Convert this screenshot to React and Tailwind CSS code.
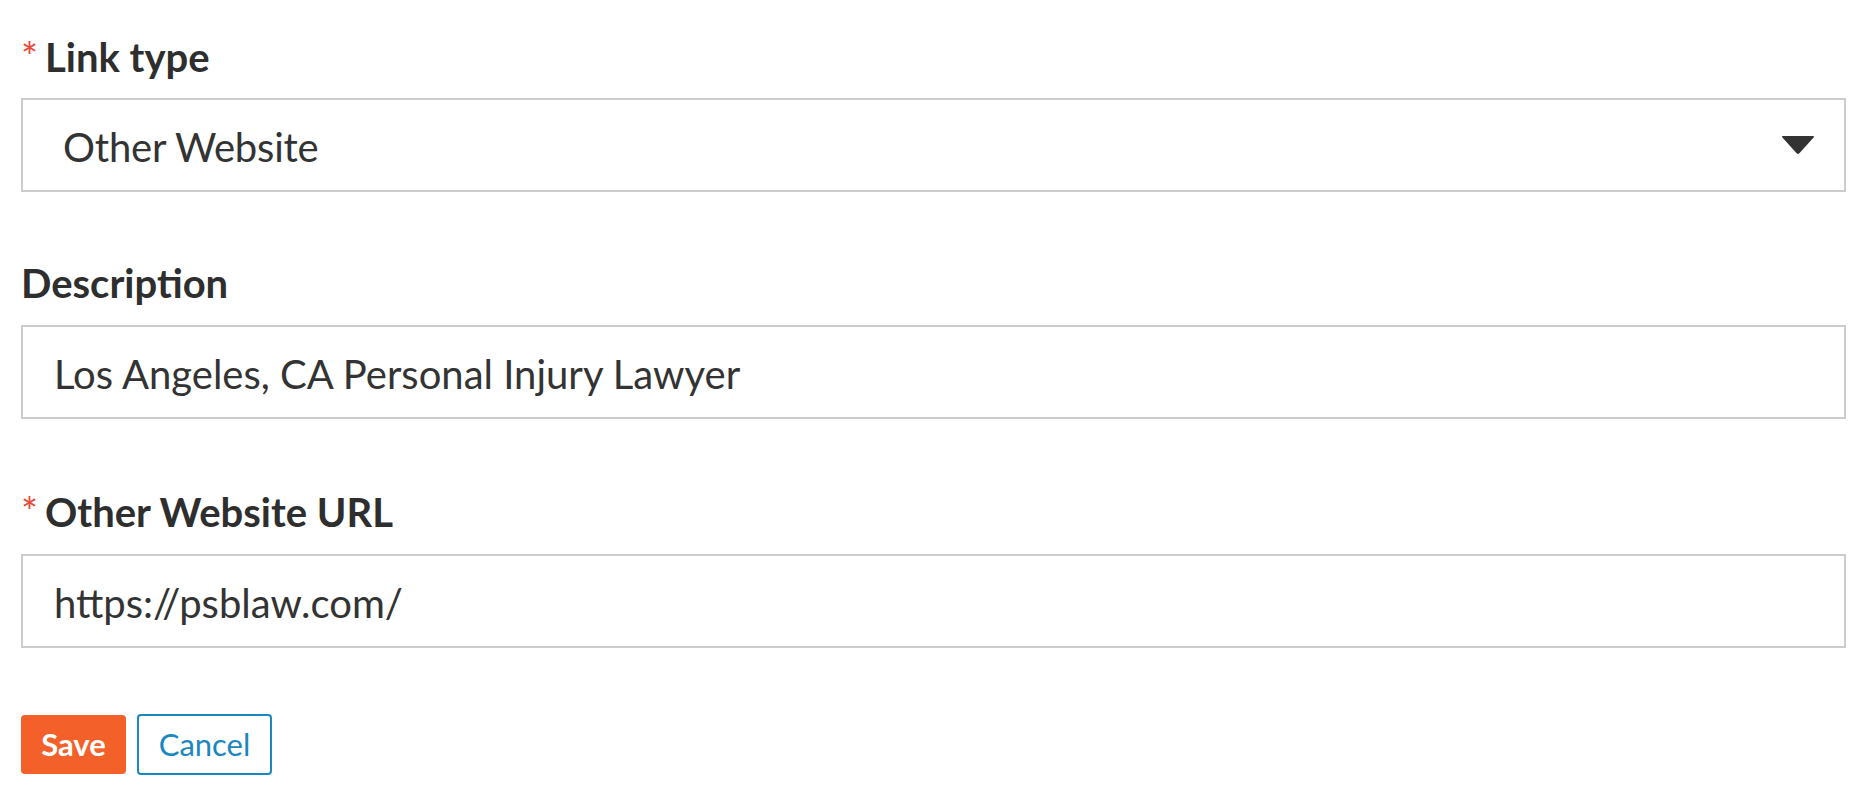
import React from 'react';

const fieldBox = 'flex h-[94px] w-full items-center border-2 border-[#cccccc] bg-white pt-[4px]';

const Label = ({ required, children }) => {
  return (
    <div className="flex h-[43px] items-center text-[40px] leading-[43px]">
      {required && <span className="mr-[7px] text-[40px] font-normal text-[#e5493a]">*</span>}
      <span className="font-bold text-[#2e2e2e]">{children}</span>
    </div>
  );
};

export default function App() {
  return (
    <div
      className="min-h-[799px] w-full bg-white pl-[21px] pr-[25px] pt-[36px] text-[#333333]"
      style={{ fontFamily: 'Lato, "Noto Sans", sans-serif' }}
    >
      <Label required>Link type</Label>
      <div className={`${fieldBox} mt-[19px] justify-between pl-[40px] pr-[29px]`}>
        <span className="text-[40px] tracking-[-0.2px]">Other Website</span>
        <svg width="34" height="20" viewBox="0 0 34 20" aria-hidden="true" className="-mt-[4px]">
          <path d="M2 1 H32 Q34 1 32.6 2.6 L18.4 18.2 Q17 19.6 15.6 18.2 L1.4 2.6 Q0 1 2 1 Z" fill="#333333" />
        </svg>
      </div>

      <div className="mt-[70px]">
        <Label>Description</Label>
        <div className={`${fieldBox} mt-[20px] pl-[31px]`}>
          <span className="text-[40px]">Los Angeles, CA Personal Injury Lawyer</span>
        </div>
      </div>

      <div className="mt-[72px]">
        <Label required>Other Website URL</Label>
        <div className={`${fieldBox} mt-[20px] pl-[31px]`}>
          <span className="text-[40px]">https://psblaw.com/</span>
        </div>
      </div>

      <div className="mt-[66px] flex items-center gap-[11px]">
        <button className="h-[59px] w-[105px] rounded-[4px] bg-[#f4602a] text-[31px] font-bold text-white">
          Save
        </button>
        <button className="h-[61px] w-[135px] rounded-[4px] border-2 border-[#1b87c1] bg-white text-[31px] text-[#1b87c1]">
          Cancel
        </button>
      </div>
    </div>
  );
}
